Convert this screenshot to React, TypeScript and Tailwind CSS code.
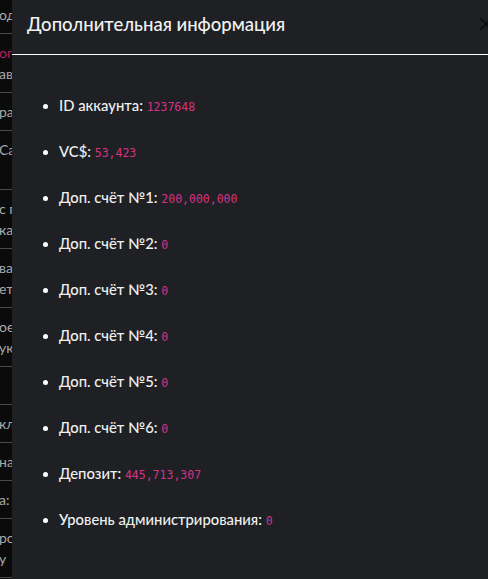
const SIDEBAR: { lines: string[]; pink?: boolean }[] = [
  { lines: ["од"] },
  { lines: ["оп", "ав"], pink: true },
  { lines: ["ра"] },
  { lines: ["Car", ""] },
  { lines: ["с п", "ка"] },
  { lines: ["ва", "ет"] },
  { lines: ["ое", "ук"] },
  { lines: [""] },
  { lines: ["кл"] },
  { lines: ["на"] },
  { lines: ["а:"] },
  { lines: ["ро:", "у"] },
  { lines: [""] },
];

const ITEMS = [
  { label: "ID аккаунта:", value: "1237648" },
  { label: "VC$:", value: "53,423" },
  { label: "Доп. счёт №1:", value: "200,000,000" },
  { label: "Доп. счёт №2:", value: "0" },
  { label: "Доп. счёт №3:", value: "0" },
  { label: "Доп. счёт №4:", value: "0" },
  { label: "Доп. счёт №5:", value: "0" },
  { label: "Доп. счёт №6:", value: "0" },
  { label: "Депозит:", value: "445,713,307" },
  { label: "Уровень администрирования:", value: "0" },
];

function Sidebar() {
  return (
    <div className="w-3 shrink-0 overflow-hidden bg-[#0b0b0c] -mt-[4px] font-['Lato',sans-serif] text-[14px]">
      {SIDEBAR.map((group, i) => (
        <div key={i} className="border-b border-[#4a4a4a] py-2">
          {group.lines.map((line, j) => (
            <div
              key={j}
              className={`h-[21px] leading-[21px] whitespace-nowrap -ml-[1px] ${
                group.pink && j === 0 ? "text-[#b51f62]" : "text-[#a9a9a9]"
              }`}
            >
              {line}
            </div>
          ))}
        </div>
      ))}
    </div>
  );
}

export default function App() {
  return (
    <div className="flex h-[579px] w-[488px] overflow-hidden bg-[#0b0b0c] font-['Lato',sans-serif]">
      <Sidebar />
      <div className="w-[500px] shrink-0 bg-[#1e2024]">
        <div className="flex h-[55px] items-center justify-between border-b border-white pl-[15px] pr-[19px]">
          <h5 className="text-[18.5px] leading-6 font-medium text-[#f2f2f2] -mt-[6px]">
            Дополнительная информация
          </h5>
          <svg width="14" height="14" viewBox="0 0 14 14" className="-mt-[6px] shrink-0">
            <path d="M1 1L13 13M13 1L1 13" stroke="#0d0e10" strokeWidth="2" />
          </svg>
        </div>
        <ul className="flex flex-col gap-[26px] pt-[41px]">
          {ITEMS.map((item) => (
            <li key={item.label} className="flex h-5 items-center">
              <span className="ml-[31px] h-[5px] w-[5px] shrink-0 rounded-full bg-white" />
              <span className="ml-[11px] whitespace-nowrap text-[14.8px] leading-5 font-medium text-[#f0f0f0]">
                {item.label}{" "}
                <code className="font-['DejaVu_Sans_Mono',monospace] text-[11.5px] font-normal text-[#d63384]">
                  {item.value}
                </code>
              </span>
            </li>
          ))}
        </ul>
      </div>
    </div>
  );
}
